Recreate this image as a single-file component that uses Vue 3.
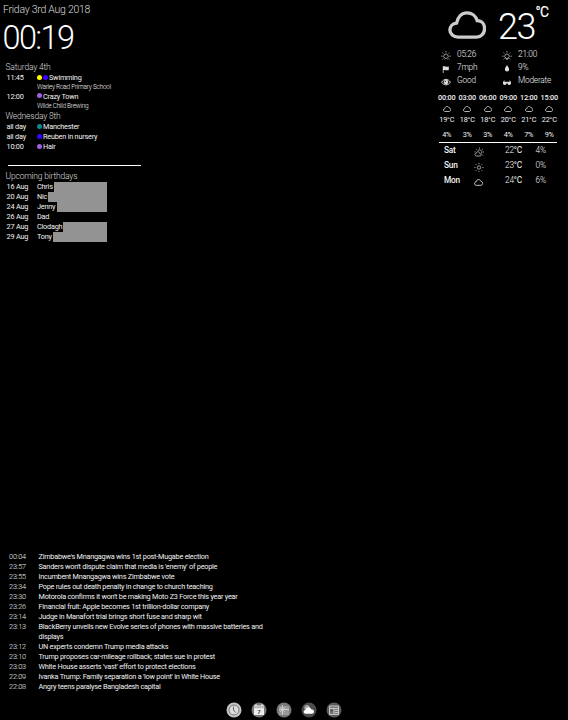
<script setup>
const days = [
  { title: 'Saturday 4th', events: [
    { time: '11:45', dots: ['#ffff00', '#4000ff'], name: 'Swimming', place: 'Warley Road Primary School' },
    { time: '12:00', dots: ['#a45fdc'], name: 'Crazy Town', place: 'Wilde Child Brewing' }
  ] },
  { title: 'Wednesday 8th', events: [
    { time: 'all day', dots: ['#11888a'], name: 'Manchester' },
    { time: 'all day', dots: ['#4000ff'], name: 'Reuben in nursery' },
    { time: '10:00', dots: ['#a45fdc'], name: 'Hair' }
  ] }
]
const birthdays = [
  { date: '16 Aug', name: 'Chris', mask: 53 },
  { date: '20 Aug', name: 'Nic', mask: 59 },
  { date: '24 Aug', name: 'Jenny', mask: 50 },
  { date: '26 Aug', name: 'Dad', mask: 0 },
  { date: '27 Aug', name: 'Clodagh', mask: 44 },
  { date: '29 Aug', name: 'Tony', mask: 54 }
]
const stats = [
  { icon: 'sunrise', text: '05:26' }, { icon: 'sunset', text: '21:00' },
  { icon: 'flag', text: '7mph' }, { icon: 'drop', text: '9%' },
  { icon: 'eye', text: 'Good' }, { icon: 'glasses', text: 'Moderate' }
]
const hours = [
  ['00:00', 19, '4%'], ['03:00', 18, '3%'], ['06:00', 18, '3%'],
  ['09:00', 20, '4%'], ['12:00', 21, '7%'], ['15:00', 22, '9%']
]
const forecast = [
  { day: 'Sat', icon: 'partly', temp: 22, rain: '4%' },
  { day: 'Sun', icon: 'sun', temp: 23, rain: '0%' },
  { day: 'Mon', icon: 'cloud', temp: 24, rain: '6%' }
]
const news = [
  ['00:04', "Zimbabwe's Mnangagwa wins 1st post-Mugabe election"],
  ['23:57', "Sanders won't dispute claim that media is 'enemy' of people"],
  ['23:55', 'Incumbent Mnangagwa wins Zimbabwe vote'],
  ['23:34', 'Pope rules out death penalty in change to church teaching'],
  ['23:30', "Motorola confirms it won't be making Moto Z3 Force this year year"],
  ['23:26', 'Financial fruit: Apple becomes 1st trillion-dollar company'],
  ['23:14', 'Judge in Manafort trial brings short fuse and sharp wit'],
  ['23:13', 'BlackBerry unveils new Evolve series of phones with massive batteries and displays'],
  ['23:12', 'UN experts condemn Trump media attacks'],
  ['23:10', 'Trump proposes car-mileage rollback; states sue in protest'],
  ['23:03', "White House asserts 'vast' effort to protect elections"],
  ['22:09', "Ivanka Trump: Family separation a 'low point' in White House"],
  ['22:08', 'Angry teens paralyse Bangladesh capital']
]
const cloud = 'M10.5 27.5C5.8 27.5 2 24.2 2 20.1c0-4 3-7 7-7.4C10.3 6.4 14.5 2 20 2c5.200 0 9.300 3.300 10.700 8.100C35.800 10.100 38.500 14 38.500 18.500c0 5-3.600 9-8.500 9z'
</script>

<template>
  <main class="mirror">
    <div class="upper">
      <section class="agenda">
        <div class="date">Friday 3rd Aug 2018</div>
        <div class="clock">00:19</div>
        <div v-for="(d, i) in days" :key="d.title" class="day" :class="{ first: !i }">
          <h2>{{ d.title }}</h2>
          <div v-for="(e, j) in d.events" :key="j" class="event">
            <div class="row">
              <span class="when">{{ e.time }}</span>
              <i v-for="c in e.dots" :key="c" class="dot" :style="{ background: c }"></i>
              <span class="name">{{ e.name }}</span>
            </div>
            <div v-if="e.place" class="place">{{ e.place }}</div>
          </div>
        </div>
        <div class="rule"></div>
        <h2>Upcoming birthdays</h2>
        <div v-for="b in birthdays" :key="b.date" class="row birthday">
          <span class="when">{{ b.date }}</span>
          <span class="person">{{ b.name }}</span>
          <i v-if="b.mask" class="mask" :style="{ width: b.mask + 'px' }"></i>
        </div>
      </section>

      <section class="weather">
        <div class="now">
          <svg class="big" viewBox="0 0 40 30"><path :d="cloud" /></svg>
          <span class="degrees">23</span><span class="unit">°C</span>
        </div>
        <div class="stats">
          <div v-for="s in stats" :key="s.icon" class="stat">
            <svg viewBox="0 0 10 10" class="glyph">
              <g v-if="s.icon === 'sunrise' || s.icon === 'sunset'" class="line">
                <path d="M3.700 8A2.200 2.200 0 1 1 6.300 8M5 1v1.500M1.500 2.700l1 .9M8.500 2.700l-1 .9M.2 6.200h1.400M8.400 6.200h1.400M1.500 9.400l1-1M8.500 9.400l-1-1" />
                <path v-if="s.icon === 'sunrise'" d="M3.500 9.200L5 7.900l1.500 1.300" />
                <path v-else d="M3.500 8.300h3L5 9.600z" />
              </g>
              <path v-else-if="s.icon === 'flag'" class="solid" d="M1.800 3h.8v.4C4 2.900 5 4.300 7.800 3.400V7C5.500 8 4 6.600 2.600 7.200V10h-.8z" />
              <path v-else-if="s.icon === 'drop'" class="solid" d="M5 2C6 3.800 7.100 5 7.100 6.400a2.100 2.100 0 0 1-4.200 0C2.900 5 4 3.800 5 2z" />
              <g v-else-if="s.icon === 'eye'">
                <path class="line bold" d="M.7 6.200C2.700 2.400 7.300 2.400 9.300 6.200 7.300 9.700 2.700 9.700.7 6.200z" />
                <circle class="solid" cx="5" cy="6" r="2.300" /><circle cx="4.300" cy="5.300" r=".6" />
              </g>
              <path v-else class="solid" d="M1 6.200Q1.700 4 2.800 4.600L2.200 5.800H4.600L5 6.300l.4-.5H7.800L7.200 4.600Q8.300 4 9 6.200V7.500Q8.700 9 7.300 9 5.900 9 5.500 7.400H4.500Q4.100 9 2.700 9 1.300 9 1 7.500z" />
            </svg>
            <span>{{ s.text }}</span>
          </div>
        </div>
        <div class="hours">
          <div v-for="h in hours" :key="h[0]" class="hour">
            <b>{{ h[0] }}</b>
            <svg viewBox="0 0 40 30"><path :d="cloud" /></svg>
            <span class="temp">{{ h[1] }}<em>°C</em></span>
            <span class="rain">{{ h[2] }}</span>
          </div>
        </div>
        <div class="forecast">
          <div v-for="f in forecast" :key="f.day" class="outlook">
            <b>{{ f.day }}</b>
            <svg v-if="f.icon === 'cloud'" class="small" viewBox="0 0 40 30"><path :d="cloud" /></svg>
            <svg v-else class="glyph" viewBox="0 0 10 10">
              <g v-if="f.icon === 'sun'" class="line">
                <circle cx="5" cy="5.500" r="1.700" />
                <path d="M5 .9v1.200M1.700 2.200l.9.900M8.300 2.200l-.9.900M.4 5.500h1.200M8.400 5.500h1.200M8.300 8.800l-.9-.9M1.700 8.800l.9-.9M5 8.900v1" />
              </g>
              <g v-else class="line">
                <path d="M3.600 4A2.200 2.200 0 1 1 7.500 6.300M2.500 9C.4 8.800.4 6.300 2.200 6.200 2.900 4.100 5.500 4.500 5.700 6.400 7.700 6.600 7.500 9 6 9z" />
                <path d="M5.500.4v1.200M2 1.800l.9.900M9 1.800l-.9.900M9 5h1M9 8.500l-.9-.9M.5 4.900h1" />
              </g>
            </svg>
            <span class="temp">{{ f.temp }}<em>°C</em></span>
            <span>{{ f.rain }}</span>
          </div>
        </div>
      </section>
    </div>

    <section class="news">
      <div v-for="n in news" :key="n[1]" class="story">
        <span class="stamp">{{ n[0] }}</span><span class="headline">{{ n[1] }}</span>
      </div>
    </section>

    <nav class="dock">
      <svg viewBox="0 0 16 16"><circle cx="8" cy="8" r="7.500" fill="#c5c5c5" /><circle cx="8" cy="8" r="5" fill="#ddd" stroke="#777" /><path d="M7.500 4.500V8l2 2.500" fill="none" stroke="#666" /></svg>
      <svg viewBox="0 0 16 16"><circle cx="8" cy="8" r="7.500" fill="#777" /><path d="M3 3.500h10V13H3z" fill="#eee" /><path d="M3 3.500h10v2.800H3z" fill="#bbb" /><path d="M5 2.200v2M11 2.200v2" stroke="#fff" /><text x="8" y="11.800" text-anchor="middle" class="seven">7</text></svg>
      <svg viewBox="0 0 16 16"><circle cx="8" cy="8" r="7.500" fill="#777" /><path d="M3 4h10v9H3z" fill="#999" /><path d="M6.500 3v10M3 7.500h10M6.500 7.500L4 5.500M6.500 7.500l3-2M6.500 7.500L4 10M6.500 7.500l2 2" stroke="#ccc" fill="none" /></svg>
      <svg viewBox="0 0 16 16"><circle cx="8" cy="8" r="7.500" fill="#4c4c4c" /><circle cx="6" cy="5.700" r="2.700" fill="#aaa" /><path d="M5 11.800c-3 0-3-3.500-.5-3.700C5.200 4.500 9.500 4.700 10 7.300c3.700-.3 4 4.500 1 4.500z" fill="#fff" /></svg>
      <svg viewBox="0 0 16 16"><circle cx="8" cy="8" r="7.500" fill="#5c5c5c" /><path d="M3.500 4h9v8.500h-9zM3.500 6.500h9M8 6.500v6M9 8.500h3M9 10.500h3" fill="#777" stroke="#c5c5c5" /><path d="M4.500 7.500h2.500v2H4.500z" fill="#555" /></svg>
    </nav>
  </main>
</template>

<style>
body { background: #000; }
</style>

<style scoped>
.mirror {
  box-sizing: border-box; width: 568px; height: 720px; overflow: hidden;
  display: flex; flex-direction: column; background: #000; color: #f2f2f2;
  font: 400 7.3px/10px Roboto, sans-serif; letter-spacing: -.15px; white-space: nowrap;
}
.upper { display: flex; justify-content: space-between; height: 552px; }
.agenda { width: 150px; padding-top: 3px; }
.date { padding-left: 3px; font-size: 10.500px; font-weight: 300; line-height: 14px; color: #ddd; letter-spacing: -.27px; }
.clock { padding-left: 2.500px; font-size: 32.500px; font-weight: 300; line-height: 42px; height: 40px; letter-spacing: -1.600px; color: #fff; }
.day { padding-top: 1px; }
.day.first { padding-top: 5px; }
h2 { margin: 0; padding-left: 5.500px; font-size: 8.500px; font-weight: 300; line-height: 11px; letter-spacing: -.18px; color: #ddd; }
.row { display: flex; align-items: center; height: 10px; }
.when { width: 30.500px; padding-left: 6.500px; letter-spacing: -.2px; }
.dot { width: 5px; height: 5px; border-radius: 50%; margin: 0 1px 1.500px 0; }
.name { letter-spacing: -.22px; }
.person { letter-spacing: -.22px; }
.place { padding-left: 37px; height: 8.500px; line-height: 8.500px; font-size: 6.500px; font-weight: 300; letter-spacing: -.26px; }
.rule { margin: 13px 0 5px 8px; width: 133px; height: 1px; background: #fff; }
.birthday { width: 107px; }
.mask { height: 10px; margin-left: auto; background: #939393; }

.weather { width: 130px; padding-top: 6px; }
.now { display: flex; height: 41px; padding-left: 10px; }
.big { width: 38px; height: 28.500px; margin-top: 5px; fill: none; stroke: #ccc; stroke-width: 3.500; }
.degrees { width: 37.500px; margin-left: 12px; font-size: 36px; font-weight: 300; line-height: 42px; letter-spacing: -1.500px; color: #fff; }
.unit { font-size: 13.800px; line-height: 12px; letter-spacing: -.6px; color: #fff; -webkit-text-stroke: .2px #fff; }
.stats { display: grid; grid-template-columns: 61px 1fr; padding-left: 3px; }
.stat { display: flex; align-items: center; height: 13px; font-size: 8.300px; line-height: 10px; font-weight: 300; letter-spacing: -.2px; }
.glyph { width: 10px; height: 10px; }
.stat .glyph { margin: 2px 6px 0 0; }
.line { fill: none; stroke: #ddd; stroke-width: .7; }
.bold { stroke-width: 1; }
.solid { fill: #ddd; }
.hours { display: grid; grid-template-columns: repeat(6, 20.500px); height: 49px; margin-left: -1.500px; padding-top: 7px; }
.hour { display: flex; flex-direction: column; align-items: center; }
.hour svg { width: 8px; height: 6px; margin: 3px 0 3px; }
.hour svg path, .small path { fill: none; stroke: #ddd; stroke-width: 4; }
.hour b { font-weight: 500; line-height: 10px; letter-spacing: -.25px; }
.rain { margin-top: 5px; }
em { font-style: normal; font-weight: 400; }
.forecast { width: 118px; margin-left: 1px; border-top: 1px solid #fff; font-size: 8.300px; letter-spacing: -.2px; }
.outlook { display: grid; grid-template-columns: 30px 31px 30.500px 1fr; align-items: center; height: 15px; line-height: 9px; padding-left: 5px; font-weight: 300; }
.outlook b { font-weight: 500; }
.outlook .glyph { margin-top: 3px; }
.small { width: 9px; height: 7px; margin-top: 4px; }

.news { height: 147px; padding-left: 9px; }
.story { display: flex; line-height: 10px; }
.stamp { width: 29.500px; font-weight: 300; }
.headline { width: 232px; white-space: normal; letter-spacing: -.235px; }
.dock { display: flex; gap: 9px; padding: 2.500px 0 0 226px; }
.dock svg { width: 16px; height: 16px; }
.seven { font: 700 6px Roboto, sans-serif; fill: #444; }
</style>
